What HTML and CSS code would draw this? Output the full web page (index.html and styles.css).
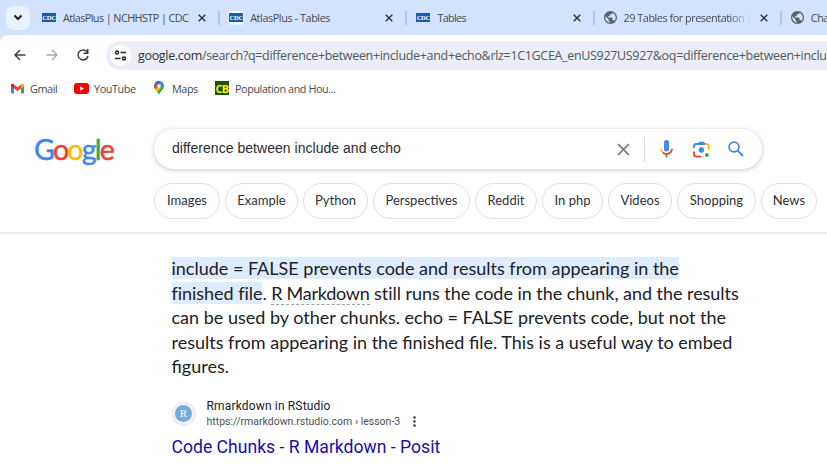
FILE: index.html
```
<!DOCTYPE html>
<html lang="en">
<head>
<meta charset="utf-8">
<title>difference between include and echo - Google Search</title>
<link rel="stylesheet" href="styles.css">
</head>
<body>
<svg width="0" height="0" class="defs">
  <symbol id="close" viewBox="0 0 8 8"><path d="M.7.7l6.600 6.600M7.300.7L.7 7.300" fill="none" stroke="#303236" stroke-width="1.400"/></symbol>
  <symbol id="globe" viewBox="2 2 20 20"><path fill="#5f6368" d="M12 2C6.480 2 2 6.480 2 12s4.480 10 10 10 10-4.480 10-10S17.520 2 12 2zm-1 17.930c-3.950-.490-7-3.850-7-7.930 0-.620.080-1.210.210-1.790L9 15v1c0 1.100.9 2 2 2v1.930zm6.900-2.540c-.260-.810-1-1.390-1.900-1.390h-1v-3c0-.550-.450-1-1-1H8v-2h2c.550 0 1-.450 1-1V7h2c1.100 0 2-.9 2-2v-.410c2.930 1.190 5 4.060 5 7.410 0 2.080-.8 3.970-2.100 5.390z"/></symbol>
</svg>
<header class="browser">
  <div class="tabs">
    <div class="menu"><svg width="10" height="7" viewBox="0 0 10 7"><path d="M1.500 1.500L5 5l3.500-3.500" fill="none" stroke="#1f1f1f" stroke-width="2"/></svg></div>
    <div class="tab first"><span class="cdc">CDC</span><span class="title wide">AtlasPlus | NCHHSTP | CDC</span><svg class="x"><use href="#close"/></svg></div>
    <div class="tab"><span class="cdc boxed">CDC</span><span class="title">AtlasPlus - Tables</span><svg class="x"><use href="#close"/></svg></div>
    <div class="tab"><span class="cdc">CDC</span><span class="title short">Tables</span><svg class="x"><use href="#close"/></svg></div>
    <div class="tab"><svg class="globe"><use href="#globe"/></svg><span class="title faded">29 Tables for presentation |</span><svg class="x"><use href="#close"/></svg></div>
    <div class="tab"><svg class="globe"><use href="#globe"/></svg><span class="title">Cha</span></div>
  </div>
  <div class="toolbar">
    <svg class="nav" viewBox="0 0 12 12"><path d="M11.500 6H1.200M6 1L1 6l5 5" fill="none" stroke="#3c4043" stroke-width="1.500"/></svg>
    <svg class="nav" viewBox="0 0 12 12"><path d="M.5 6h10.300M6 1l5 5-5 5" fill="none" stroke="#a5a7aa" stroke-width="1.300"/></svg>
    <svg class="nav" viewBox="0 0 12 12"><path d="M10.300 3.200A5 5 0 1 0 11 7" fill="none" stroke="#3c4043" stroke-width="1.500"/><path d="M11.500 0v5h-5V3.600h3.400V0z" fill="#3c4043"/></svg>
    <div class="omnibox">
      <span class="tune"><svg width="13" height="11" viewBox="0 0 13 11"><g fill="none" stroke="#27292c" stroke-width="1.500"><circle cx="3" cy="2.500" r="1.500"/><path d="M6.500 2.500H12M1 8.500h5.500"/><circle cx="10" cy="8.500" r="1.500"/></g></svg></span>
      <span class="url"><b>google.com</b>/search?q=difference+between+include+and+echo&amp;rlz=1C1GCEA_enUS927US927&amp;oq=difference+between+inclu</span>
    </div>
  </div>
  <nav class="bookmarks">
    <a class="bm gmail"><svg width="13" height="11" viewBox="0 0 13 11"><path fill="#4285f4" d="M0 2v7.500Q0 10.500 1 10.500h2V4z"/><path fill="#34a853" d="M10 4v6.500h2q1 0 1-1V2z"/><path fill="#ea4335" d="M3 1.500L6.500 4.300 10 1.500v3.900L6.500 8.200 3 5.400z"/><path fill="#c5221f" d="M0 2Q0 .5 1.500.5L3 1.500v3.900L0 3z"/><path fill="#fbbc04" d="M10 1.500L11.500.5Q13 .5 13 2v1l-3 2.400z"/></svg>Gmail</a>
    <a class="bm youtube"><svg width="15" height="11" viewBox="0 0 15 11"><rect width="15" height="11" rx="3" fill="#f00"/><path d="M6 3.200v4.600l4-2.300z" fill="#fff"/></svg>YouTube</a>
    <a class="bm maps"><svg width="10" height="14" viewBox="0 0 10 14"><path fill="#34a853" d="M5 14C4.500 11 0 8.500 0 5a5 5 0 0 1 10 0c0 3.500-4.500 6-5 9z"/><path fill="#fbbc04" d="M1 8l4-3 2 2-4 4z"/><path fill="#ea4335" d="M1.100 1.900L5 5 1.200 8Q0 6.500 0 5 0 3.200 1.100 1.900z"/><path fill="#1a73e8" d="M1.100 1.900A5 5 0 0 1 6.500.2L3.500 4z"/><path fill="#4285f4" d="M6.500.2A5 5 0 0 1 9.400 2.700L6 6 3.500 4z"/><circle cx="5" cy="5" r="1.800" fill="#fff"/></svg>Maps</a>
    <a class="bm pop"><span class="cb">CB</span>Population and Hou...</a>
  </nav>
</header>
<main>
  <div class="searchrow">
    <div class="logo"><span class="b">G</span><span class="r">o</span><span class="y">o</span><span class="b">g</span><span class="g">l</span><span class="r">e</span></div>
    <div class="search">
      <span class="query">difference between include and echo</span>
      <svg class="clear" width="13" height="13" viewBox="0 0 13 13"><path d="M1 1l11 11M12 1L1 12" fill="none" stroke="#70757a" stroke-width="1.700"/></svg>
      <span class="rule"></span>
      <svg class="mic" width="13" height="18" viewBox="0 0 13 18"><rect x="4" y="0" width="5" height="11.500" rx="2.500" fill="#4285f4"/><path d="M5.700 14h1.700v3.500H5.700z" fill="#34a853"/><path d="M2.600 12.400a5.500 5.500 0 0 0 9.400-3.600" fill="none" stroke="#ea4335" stroke-width="1.700"/><path d="M1 8.800a5.500 5.500 0 0 0 1.800 3.800" fill="none" stroke="#fbbc04" stroke-width="1.700"/></svg>
      <svg class="lens" width="17" height="17" viewBox="0 0 17 17"><g fill="none" stroke-width="1.800"><path d="M1 7V5.500Q1 3 3.500 3H12" stroke="#4285f4"/><path d="M12 3h1.200Q15.700 3 15.700 5.500V9" stroke="#fbbc04"/><path d="M1 10.500v2.500q0 2.700 2.700 2.700H8" stroke="#ea4335"/></g><path d="M5 3l1-2.200h5L12 3z" fill="#4285f4"/><circle cx="8.400" cy="9" r="2.700" fill="#4285f4"/><circle cx="13.800" cy="14" r="1.900" fill="#34a853"/></svg>
      <svg class="find" width="16" height="16" viewBox="0 0 16 16"><g fill="none" stroke="#4285f4" stroke-width="1.800"><circle cx="6" cy="6" r="4.900"/><path d="M9.500 9.500l5.500 5.500"/></g></svg>
    </div>
  </div>
  <div class="chips">
    <a class="c1">Images</a><a class="c2">Example</a><a class="c3">Python</a><a class="c4">Perspectives</a><a class="c5">Reddit</a><a class="c6">In php</a><a class="c7">Videos</a><a class="c8">Shopping</a><a class="c9">News</a>
  </div>
  <section class="answer">
    <p><mark>include = FALSE prevents code and results from appearing in the</mark><br>
    <span class="tight"><mark>finished file</mark>. <span class="term">R Markdown</span> still runs the code in the chunk, and the results</span><br>
    can be used by other chunks. echo = FALSE prevents code, but not the<br>
    results from appearing in the finished file. This is a useful way to embed<br>
    figures.</p>
    <div class="source">
      <span class="avatar"><i>R</i></span>
      <div><div class="site">Rmarkdown in RStudio</div>
      <div class="path">https://rmarkdown.rstudio.com › lesson-3<svg width="3" height="11" viewBox="0 0 3 11"><g fill="#3c4043"><circle cx="1.500" cy="1.500" r="1.300"/><circle cx="1.500" cy="5.500" r="1.300"/><circle cx="1.500" cy="9.500" r="1.300"/></g></svg></div></div>
    </div>
    <a class="result">Code Chunks - R Markdown - Posit</a>
  </section>
</main>
</body>
</html>
```
FILE: styles.css
```
* { box-sizing: border-box; }
body { margin: 0; width: 827px; height: 467px; overflow: hidden; background: #fff; color: #202124; font-family: "Open Sans", sans-serif; }
.defs { display: none; }
.browser { background: #d3e3fd; }
.tabs { height: 35px; display: flex; align-items: center; overflow: hidden; }
.menu { flex: none; width: 24px; height: 24px; margin: 0 1px 0 6px; border-radius: 8px; background: #e9f1fe; display: flex; align-items: center; justify-content: center; }
.tab { flex: none; width: 187.2px; height: 14px; padding: 0 12px 0 9px; border-left: 2px solid #a8c7fa; display: flex; align-items: center; color: #474b50; }
.tab.first { border-color: transparent; }
.title { flex: 1; margin-left: 7px; font-size: 10.8px; letter-spacing: -.4px; line-height: 18px; white-space: nowrap; overflow: hidden; }
.title.wide { letter-spacing: -.56px; }
.title.short { letter-spacing: -.65px; }
.faded { margin-right: 8px; letter-spacing: -.45px; -webkit-mask-image: linear-gradient(90deg, #000 82%, transparent); mask-image: linear-gradient(90deg, #000 82%, transparent); }
.x { width: 8px; height: 8px; flex: none; }
.globe { width: 13px; height: 13px; flex: none; }
.cdc { flex: none; width: 14px; height: 9px; background: #1c5cab; color: #fff; font: bold 6.5px/9px "Liberation Serif", serif; text-align: center; letter-spacing: -.2px; }
.cdc.boxed { box-shadow: 0 0 0 .5px #fff, 0 2.500px 0 #fff, 0 -2px 0 #fff; }
.toolbar { height: 38px; padding: 6px 0 0 14px; display: flex; background: #fff; border-top-left-radius: 8px; }
.nav { width: 12px; height: 12px; flex: none; margin: 8px 20px 0 0; }
.nav + .nav { margin-right: 19px; }
.omnibox { flex: 1; min-width: 0; height: 29px; margin-left: -2px; padding-left: 4px; display: flex; align-items: center; background: #ebeef7; border-radius: 15px 0 0 15px; overflow: hidden; }
.tune { flex: none; width: 21px; height: 21px; border-radius: 50%; background: #fff; display: flex; align-items: center; justify-content: center; }
.url { margin-left: 7px; font-size: 12.5px; letter-spacing: -.325px; white-space: nowrap; color: #55595e; }
.url b { font-weight: 400; color: #303337; }
.bookmarks { height: 30px; padding-left: 11px; display: flex; align-items: center; background: #fff; color: #474b50; font-size: 10.8px; letter-spacing: -.4px; }
.bm { display: flex; align-items: center; white-space: nowrap; }
.bm svg { flex: none; }
.gmail { width: 63px; gap: 6px; }
.youtube { width: 80px; gap: 5px; }
.maps { width: 61px; gap: 8px; }
.pop { gap: 6px; }
.cb { width: 14px; height: 14px; background: #1f5314; color: #fff200; font: bold 11px/15px "Open Sans", sans-serif; letter-spacing: -.7px; text-align: center; }
.searchrow { display: flex; padding: 26px 0 0 34px; height: 80px; }
.logo { width: 120px; font: 28.5px/40px Lato, sans-serif; letter-spacing: -1.75px; -webkit-text-stroke: .5px currentColor; }
.b { color: #4285f4; } .r { color: #ea4335; } .y { color: #fbbc05; } .g { color: #34a853; }
.search { width: 608px; height: 40px; padding: 0 17px 0 18px; border-radius: 20px; display: flex; align-items: center; box-shadow: 0 1px 5px rgba(32,33,36,.26); }
.query { flex: 1; padding-bottom: 2px; font: 14px/20px "Liberation Sans", Arial, sans-serif; letter-spacing: .03px; color: #2a2b2e; }
.rule { width: 1px; height: 25px; margin: 0 15px 0 14px; background: #dadce0; }
.mic { margin-right: 20px; }
.lens { margin-right: 18px; }
.find { margin-right: 1px; }
.chips { height: 51px; padding-left: 154px; display: flex; border-bottom: 2px solid #ebebeb; }
.chips a { flex: none; height: 36px; border: 1px solid #dfe1e5; border-radius: 18px; font: 13px/33px Lato, sans-serif; color: #303134; text-align: center; white-space: nowrap; margin-right: 5px; }
.chips .c1 { width: 66px; } .chips .c2 { width: 73px; } .chips .c3 { width: 65px; } .chips .c4 { width: 97px; }
.chips .c5 { width: 62px; } .chips .c6 { width: 61px; } .chips .c7 { width: 64px; } .chips .c8 { width: 79px; } .chips .c9 { width: 56px; }
.answer { padding: 22px 0 0 171.5px; }
.answer p { margin: 0; font: 18px/24.6px Lato, sans-serif; white-space: nowrap; }
mark { background: #dfebff; color: inherit; }
.tight { letter-spacing: -.04px; }
.term { border-bottom: 1px dashed #9aa0a6; letter-spacing: -.25px; }
.source { display: flex; height: 30px; margin-top: 20px; align-items: center; }
.avatar { width: 24px; height: 24px; margin-right: 11px; border-radius: 50%; background: #f1f3f4; border: 1px solid #e4e6ea; display: flex; align-items: center; justify-content: center; }
.avatar i { width: 17px; height: 17px; border-radius: 50%; background: #75aadb; color: #fff; font: 11px/17px "Liberation Serif", serif; text-align: center; }
.site { font: 12px/16px Roboto, sans-serif; letter-spacing: .16px; }
.path { display: flex; align-items: center; gap: 13px; font: 10.5px/15px Roboto, sans-serif; color: #4d5156; }
.result { display: block; margin-top: 7px; font: 17.6px/22px Roboto, sans-serif; color: #1a0dab; }
```
